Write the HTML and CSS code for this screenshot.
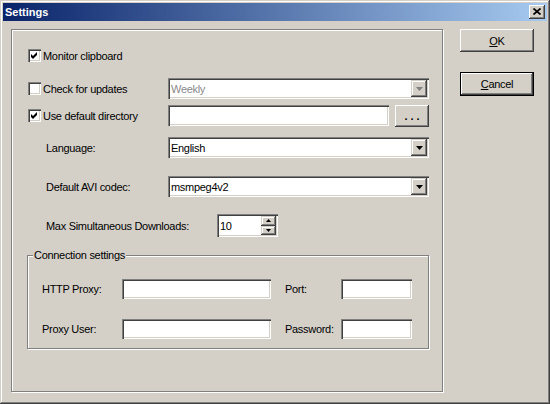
FILE: index.html
```html
<!DOCTYPE html>
<html>
<head>
<meta charset="utf-8">
<title>Settings</title>
<link rel="stylesheet" href="styles.css">
</head>
<body>
<div class="window">
  <div class="titlebar">
    <span class="title">Settings</span>
    <span class="close"><svg width="8" height="7" viewBox="0 0 8 7"><path d="M0.5 0.5L7.5 6.5M7.5 0.5L0.5 6.5" stroke="#000" stroke-width="1.7"/></svg></span>
  </div>
  <div class="client">
    <div class="panel">
      <div class="row r1">
        <span class="cb"><svg width="9" height="9" viewBox="0 0 9 9"><polygon points="1,3 3,5 7,1 7,4 3,8 1,6" fill="#000"/></svg></span>
        <span class="cbl">Monitor clipboard</span>
      </div>
      <div class="row r2">
        <span class="lead"><span class="cb"></span><span class="cbl">Check for updates</span></span>
        <div class="field combo disabled"><span class="val">Weekly</span><span class="arrow"><svg width="7" height="4" viewBox="0 0 7 4"><polygon points="0,0 7,0 3.5,4" fill="#808080"/></svg></span></div>
      </div>
      <div class="row r3">
        <span class="lead"><span class="cb"><svg width="9" height="9" viewBox="0 0 9 9"><polygon points="1,3 3,5 7,1 7,4 3,8 1,6" fill="#000"/></svg></span><span class="cbl">Use default directory</span></span>
        <div class="field dir"></div>
        <div class="btn dots">...</div>
      </div>
      <div class="row r4">
        <span class="lead indent">Language:</span>
        <div class="field combo"><span class="val">English</span><span class="arrow"><svg width="7" height="4" viewBox="0 0 7 4"><polygon points="0,0 7,0 3.5,4" fill="#000"/></svg></span></div>
      </div>
      <div class="row r5">
        <span class="lead indent">Default AVI codec:</span>
        <div class="field combo"><span class="val">msmpeg4v2</span><span class="arrow"><svg width="7" height="4" viewBox="0 0 7 4"><polygon points="0,0 7,0 3.5,4" fill="#000"/></svg></span></div>
      </div>
      <div class="row r6">
        <span class="lead indent wide">Max Simultaneous Downloads:</span>
        <div class="field spin">
          <span class="val">10</span>
          <span class="sbtns">
            <span class="sb"><svg width="5" height="3" viewBox="0 0 5 3"><polygon points="2.5,0 5,3 0,3" fill="#000"/></svg></span>
            <span class="sb"><svg width="5" height="3" viewBox="0 0 5 3"><polygon points="0,0 5,0 2.5,3" fill="#000"/></svg></span>
          </span>
        </div>
      </div>
      <div class="group">
        <span class="legend">Connection settings</span>
        <div class="grid">
          <span class="glbl">HTTP Proxy:</span>
          <div class="field"></div>
          <span class="glbl second">Port:</span>
          <div class="field"></div>
          <span class="glbl">Proxy User:</span>
          <div class="field"></div>
          <span class="glbl second">Password:</span>
          <div class="field"></div>
        </div>
      </div>
    </div>
    <div class="buttons">
      <div class="btn"><span><u>O</u>K</span></div>
      <div class="btn default"><span><u>C</u>ancel</span></div>
    </div>
  </div>
</div>
</body>
</html>
```

FILE: styles.css
```css
* { box-sizing: border-box; }
body {
  margin: 0;
  font: 11px "Liberation Sans", Arial, sans-serif;
  letter-spacing: -0.3px;
  color: #000;
  background: #d4d0c8;
}
.window {
  width: 550px;
  height: 404px;
  padding: 3px;
  background: #d4d0c8;
  box-shadow: inset -1px -1px #404040, inset 1px 1px #d4d0c8, inset -2px -2px #808080, inset 2px 2px #fff;
  display: flex;
  flex-direction: column;
}
.titlebar {
  height: 18px;
  flex: none;
  display: flex;
  align-items: center;
  justify-content: space-between;
  background: linear-gradient(to right, #0a246a, #a6caf0);
  color: #fff;
  font-weight: bold;
  letter-spacing: 0;
  padding: 0 2px 0 2px;
}
.close {
  width: 16px;
  height: 14px;
  background: #d4d0c8;
  box-shadow: inset -1px -1px #404040, inset 1px 1px #fff, inset -2px -2px #808080;
  display: flex;
  align-items: center;
  justify-content: center;
  padding-bottom: 1px;
}
.close svg { display: block; }
.client {
  flex: 1;
  display: flex;
  padding: 8px 13px 9px 8px;
}
.panel {
  width: 432px;
  flex: none;
  border: 1px solid #808080;
  box-shadow: 1px 1px 0 #fff, inset 1px 1px 0 #fff;
  padding: 0 13px 0 16px;
}
.row { display: flex; align-items: center; }
.r1 { margin-top: 19px; height: 13px; }
.r2 { margin-top: 16px; height: 21px; }
.r3 { margin-top: 6px; height: 21px; }
.r4 { margin-top: 11px; height: 21px; }
.r5 { margin-top: 18px; height: 21px; }
.r6 { margin-top: 17px; height: 23px; }
.lead {
  width: 140px;
  flex: none;
  display: flex;
  align-items: center;
}
.lead.indent { padding-left: 18px; }
.lead.wide { width: 189px; }
.cb {
  width: 13px;
  height: 13px;
  flex: none;
  background: #fff;
  box-shadow: inset 1px 1px #808080, inset 2px 2px #404040, inset -1px -1px #fff, inset -2px -2px #d4d0c8;
  display: flex;
  align-items: center;
  justify-content: center;
  margin-right: 2px;
}
.cb svg { display: block; }
.field {
  background: #fff;
  box-shadow: inset 1px 1px #808080, inset 2px 2px #404040, inset -1px -1px #fff, inset -2px -2px #d4d0c8;
  display: flex;
  align-items: center;
  height: 20px;
}
.combo {
  flex: 1;
  height: 21px;
  padding: 2px;
}
.combo .val { flex: 1; padding-left: 1px; }
.combo.disabled .val { color: #8a8a8a; }
.arrow {
  width: 16px;
  height: 17px;
  flex: none;
  background: #d4d0c8;
  box-shadow: inset -1px -1px #404040, inset 1px 1px #d4d0c8, inset -2px -2px #808080, inset 2px 2px #fff;
  display: flex;
  align-items: center;
  justify-content: center;
}
.arrow svg, .sb svg { display: block; }
.dir { flex: 1; height: 21px; }
.btn {
  background: #d4d0c8;
  box-shadow: inset -1px -1px #404040, inset 1px 1px #fff, inset -2px -2px #808080;
  display: flex;
  align-items: center;
  justify-content: center;
  height: 23px;
}
.dots {
  width: 34px;
  height: 22px;
  margin-left: 6px;
  letter-spacing: 3px;
  padding-left: 3px;
  font-weight: bold;
  align-self: flex-start;
}
.spin {
  width: 61px;
  height: 23px;
  padding: 2px;
}
.spin .val { flex: 1; padding-left: 1px; }
.sbtns {
  width: 15px;
  height: 19px;
  display: flex;
  flex-direction: column;
}
.sb {
  flex: 1;
  background: #d4d0c8;
  box-shadow: inset -1px -1px #404040, inset 1px 1px #d4d0c8, inset -2px -2px #808080, inset 2px 2px #fff;
  display: flex;
  align-items: center;
  justify-content: center;
}
.group {
  margin: 18px 0 0 -1px;
  border: 1px solid #808080;
  box-shadow: 1px 1px 0 #fff, inset 1px 1px 0 #fff;
  padding: 0 0 9px 14px;
}
.legend {
  display: inline-block;
  line-height: 13px;
  margin-top: -7px;
  margin-left: -9px;
  padding: 0 1px;
  background: #d4d0c8;
  vertical-align: top;
}
.grid {
  margin-top: 11px;
  display: grid;
  grid-template-columns: 80px 149px 70px 71px;
  grid-auto-rows: 20px;
  row-gap: 20px;
  align-items: center;
}
.glbl.second { padding-left: 14px; }
.buttons {
  margin-left: 17px;
  width: 74px;
  display: flex;
  flex-direction: column;
}
.buttons .btn.default {
  margin-top: 20px;
  border: 1px solid #000;
  height: 24px;
}
```
